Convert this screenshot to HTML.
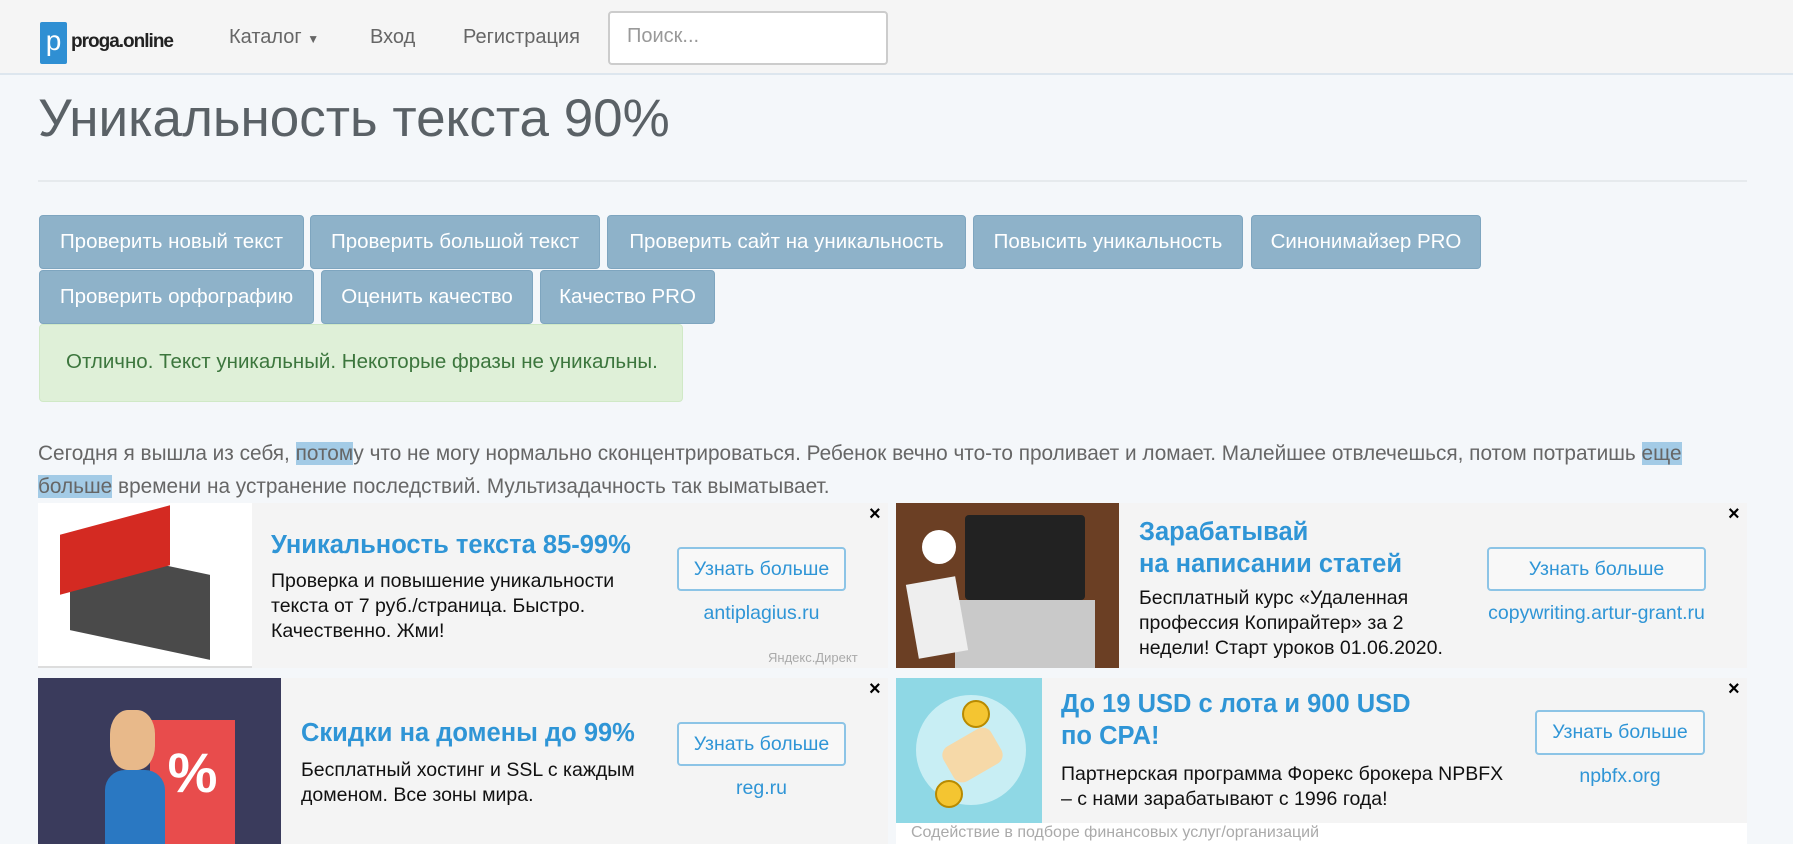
<!DOCTYPE html>
<html><head><meta charset="utf-8"><style>
*{box-sizing:border-box;margin:0;padding:0}
body{width:1793px;height:844px;overflow:hidden;background:#f4f7fa;font-family:"Liberation Sans","Noto Sans CJK SC",sans-serif;position:relative;color:#555}
.a{position:absolute}
.nav{left:0;top:0;width:1793px;height:75px;background:#f5f5f5;border-bottom:2px solid #dde6ee}
.nl{font-size:20px;color:#666;top:26px}
.btn{position:absolute;height:54px;background:#8eb2c9;border:1px solid #7ea5bf;border-radius:4px;color:#fff;font-size:20.5px;line-height:52px;text-align:center;white-space:nowrap}
.ad{position:absolute;background:#f4f4f4}
.t{position:absolute;color:#2f95d6;font-weight:bold;font-size:25.5px;line-height:32px;white-space:nowrap}
.d{position:absolute;color:#111;font-size:19.5px;line-height:25px;white-space:nowrap}
.ub{position:absolute;border:2px solid #8cc4e6;border-radius:4px;color:#2f95d6;font-size:19.5px;text-align:center;background:#f8f8f8}
.dom{position:absolute;color:#2f95d6;font-size:19.5px;text-align:center}
.x{position:absolute;font-size:20px;color:#000;font-weight:bold}
.hl{background:#a3cbe6}
</style></head><body>
<div class="a nav"></div>
<div class="a" style="left:40px;top:22px;width:27px;height:42px;background:#2f8fd3;border-radius:2px;color:#fff;font-size:28px;text-align:center;line-height:38px">p</div>
<div class="a" style="left:71px;top:31px;font-size:19px;font-weight:bold;color:#222;letter-spacing:-1px">proga.online</div>
<div class="a nl" style="left:229px">Каталог <span style="font-size:12px">▼</span></div>
<div class="a nl" style="left:370px">Вход</div>
<div class="a nl" style="left:463px">Регистрация</div>
<div class="a" style="left:608px;top:11px;width:280px;height:54px;background:#fff;border:2px solid #ccc;border-radius:4px;font-size:20px;color:#999;padding:12px 17px">Поиск...</div>
<div class="a" style="left:38px;top:88px;font-size:53px;color:#5a6166">Уникальность текста 90%</div>
<div class="a" style="left:38px;top:180px;width:1709px;height:2px;background:#e6eaed"></div>
<div class="btn" style="left:39px;top:215px;width:265px">Проверить новый текст</div>
<div class="btn" style="left:310px;top:215px;width:290px">Проверить большой текст</div>
<div class="btn" style="left:607px;top:215px;width:359px">Проверить сайт на уникальность</div>
<div class="btn" style="left:973px;top:215px;width:270px">Повысить уникальность</div>
<div class="btn" style="left:1251px;top:215px;width:230px">Синонимайзер PRO</div>
<div class="btn" style="left:39px;top:270px;width:275px">Проверить орфографию</div>
<div class="btn" style="left:321px;top:270px;width:212px">Оценить качество</div>
<div class="btn" style="left:540px;top:270px;width:175px">Качество PRO</div>
<div class="a" style="left:39px;top:324px;width:644px;height:78px;background:#dff0d8;border:1px solid #d0e9c6;border-radius:4px;color:#3c763d;font-size:20.5px;padding:25px 26px;white-space:nowrap">Отлично. Текст уникальный. Некоторые фразы не уникальны.</div>
<div class="a" style="left:38px;top:437px;width:1700px;font-size:20.8px;line-height:33px;color:#666">Сегодня я вышла из себя, <span class="hl">потом</span>у что не могу нормально сконцентрироваться. Ребенок вечно что-то проливает и ломает. Малейшее отвлечешься, потом потратишь <span class="hl">еще</span><br><span class="hl">больше</span> времени на устранение последствий. Мультизадачность так выматывает.</div>

<div class="ad" style="left:38px;top:503px;width:850px;height:165px"></div>
<div class="a" style="left:38px;top:503px;width:214px;height:165px;background:#fff;border-bottom:2px solid #ddd"></div>
<div class="a" style="left:70px;top:560px;width:140px;height:85px;background:#4a4a4a;transform:skewY(12deg)"></div>
<div class="a" style="left:60px;top:520px;width:110px;height:60px;background:#d42a22;transform:skewY(-15deg)"></div>
<div class="t" style="left:271px;top:529px">Уникальность текста 85-99%</div>
<div class="d" style="left:271px;top:569px">Проверка и повышение уникальности<br>текста от 7 руб./страница. Быстро.<br>Качественно. Жми!</div>
<div class="ub" style="left:677px;top:547px;width:169px;height:44px;line-height:40px">Узнать больше</div>
<div class="dom" style="left:677px;top:602px;width:169px">antiplagius.ru</div>
<div class="a" style="left:768px;top:650px;font-size:13px;color:#aaa">Яндекс.Директ</div>
<div class="x" style="left:869px;top:503px">×</div>

<div class="ad" style="left:896px;top:503px;width:851px;height:165px"></div>
<div class="a" style="left:896px;top:503px;width:223px;height:165px;background:#6b3f24"></div>
<div class="a" style="left:965px;top:515px;width:120px;height:85px;background:#222;border-radius:4px"></div>
<div class="a" style="left:955px;top:600px;width:140px;height:68px;background:#c9c9c9"></div>
<div class="a" style="left:912px;top:580px;width:50px;height:75px;background:#eee;transform:rotate(-10deg)"></div>
<div class="a" style="left:922px;top:530px;width:34px;height:34px;background:#fff;border-radius:50%"></div>
<div class="t" style="left:1139px;top:516px">Зарабатывай<br>на написании статей</div>
<div class="d" style="left:1139px;top:586px">Бесплатный курс «Удаленная<br>профессия Копирайтер» за 2<br>недели! Старт уроков 01.06.2020.</div>
<div class="ub" style="left:1487px;top:547px;width:219px;height:44px;line-height:40px">Узнать больше</div>
<div class="dom" style="left:1467px;top:602px;width:259px">copywriting.artur-grant.ru</div>
<div class="x" style="left:1728px;top:503px">×</div>

<div class="ad" style="left:38px;top:678px;width:850px;height:166px"></div>
<div class="a" style="left:38px;top:678px;width:243px;height:166px;background:#3a3b5c"></div>
<div class="a" style="left:150px;top:720px;width:85px;height:124px;background:#e84c4c;color:#fff;font-size:56px;font-weight:bold;text-align:center;padding-top:20px">%</div>
<div class="a" style="left:105px;top:770px;width:60px;height:74px;background:#2a78c2;border-radius:20px 20px 0 0"></div>
<div class="a" style="left:110px;top:710px;width:45px;height:60px;background:#e8b98a;border-radius:40%"></div>
<div class="t" style="left:301px;top:717px">Скидки на домены до 99%</div>
<div class="d" style="left:301px;top:758px">Бесплатный хостинг и SSL с каждым<br>доменом. Все зоны мира.</div>
<div class="ub" style="left:677px;top:722px;width:169px;height:44px;line-height:40px">Узнать больше</div>
<div class="dom" style="left:677px;top:777px;width:169px">reg.ru</div>
<div class="x" style="left:869px;top:678px">×</div>

<div class="ad" style="left:896px;top:678px;width:851px;height:145px"></div>
<div class="a" style="left:896px;top:823px;width:851px;height:21px;background:#fff"></div>
<div class="a" style="left:911px;top:824px;font-size:16px;color:#aaa">Содействие в подборе финансовых услуг/организаций</div>
<div class="a" style="left:896px;top:678px;width:146px;height:145px;background:#8fd8e5"></div>
<div class="a" style="left:916px;top:695px;width:110px;height:110px;background:#c8eef4;border-radius:50%"></div>
<div class="a" style="left:945px;top:735px;width:55px;height:40px;background:#f6d9a8;border-radius:10px;transform:rotate(-30deg)"></div>
<div class="a" style="left:962px;top:700px;width:28px;height:28px;background:#f4c531;border:2px solid #b88a00;border-radius:50%"></div>
<div class="a" style="left:935px;top:780px;width:28px;height:28px;background:#f4c531;border:2px solid #b88a00;border-radius:50%"></div>
<div class="t" style="left:1061px;top:688px">До 19 USD с лота и 900 USD<br>по CPA!</div>
<div class="d" style="left:1061px;top:762px">Партнерская программа Форекс брокера NPBFX<br>– с нами зарабатывают с 1996 года!</div>
<div class="ub" style="left:1535px;top:710px;width:170px;height:45px;line-height:41px">Узнать больше</div>
<div class="dom" style="left:1535px;top:765px;width:170px">npbfx.org</div>
<div class="x" style="left:1728px;top:678px">×</div>
</body></html>
